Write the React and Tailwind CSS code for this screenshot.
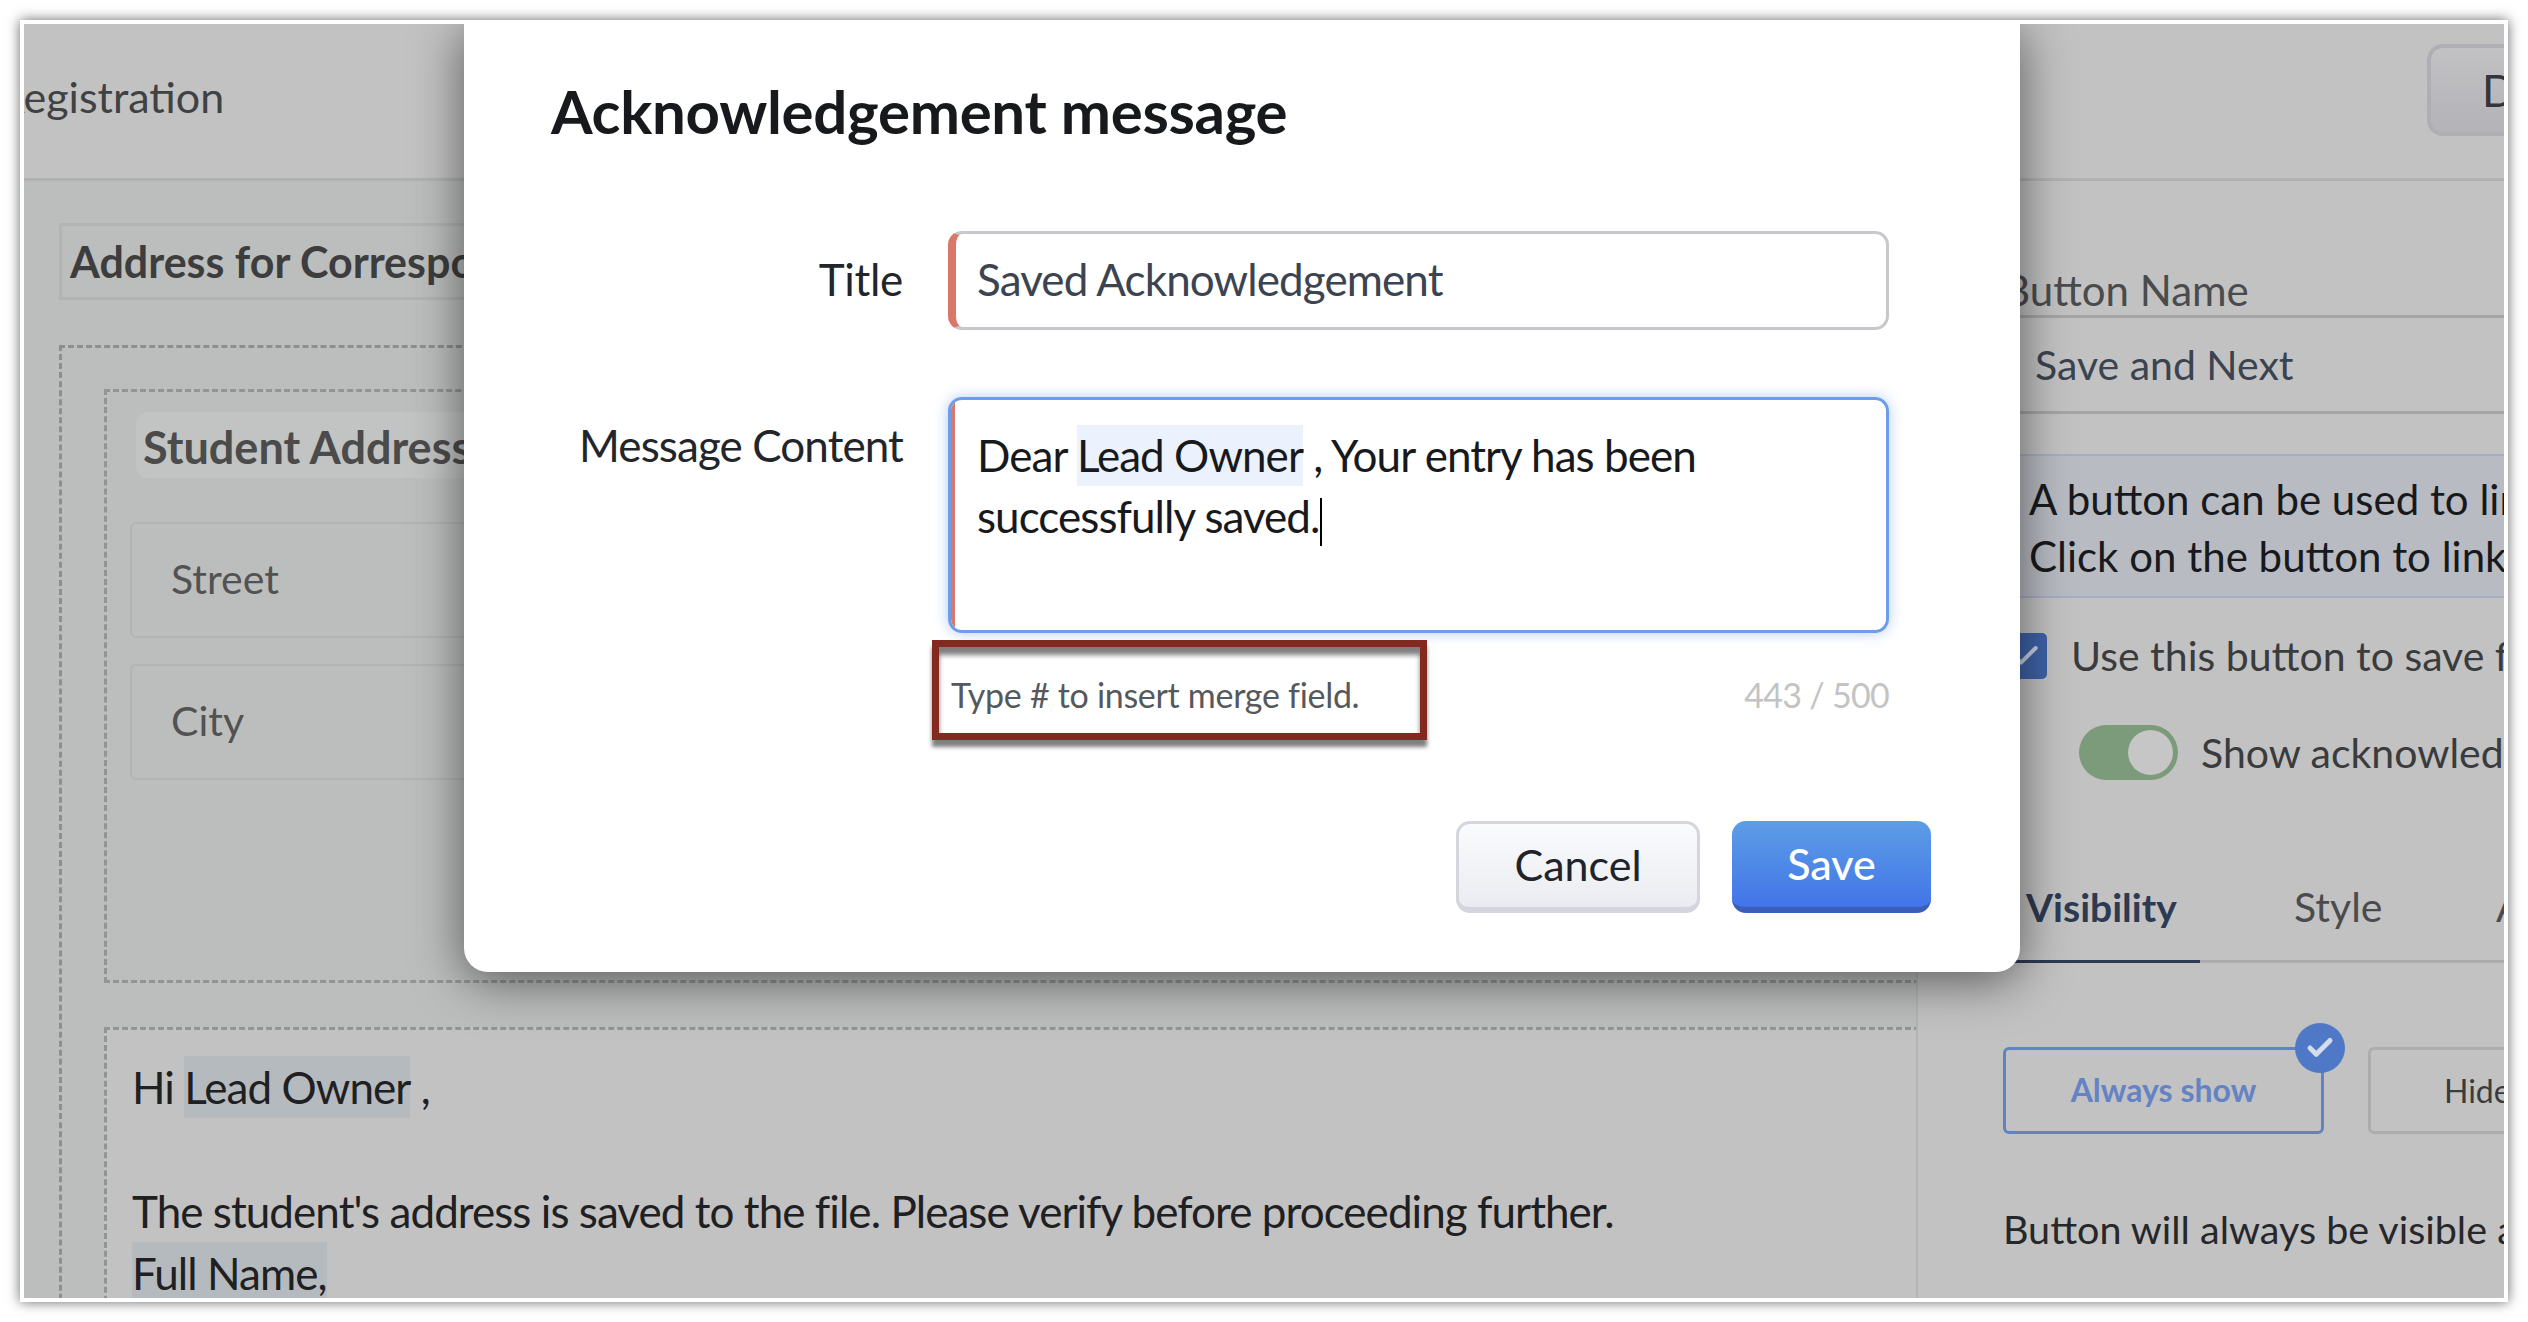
import { Check } from "lucide-react"

function Chip({ children, className = "bg-[#b5babf]" }) {
  return <span className={`inline-block ${className}`}>{children}</span>
}

function Dialog() {
  return (
    <div className="absolute left-[440px] top-0 w-[1556px] h-[948px] bg-white rounded-b-[24px] shadow-[0_8px_50px_rgba(0,0,0,0.55)] pl-[87px] pr-[89px] pt-[56px]">
      <h2 className="text-[60px] leading-[62px] font-bold tracking-[-0.3px] text-[#17191c] whitespace-nowrap">Acknowledgement message</h2>

      <div className="flex mt-[89px]">
        <label className="w-[352px] text-right text-[44px] tracking-[-0.3px] leading-[97px] text-[#22262b]">Title</label>
        <div className="ml-[45px] w-[941px] h-[99px] rounded-[14px] border-[3px] border-l-[8px] border-[#c6c8cb] border-l-[#d9776b] pl-[21px] text-[44px] tracking-[-0.9px] leading-[91px] text-[#3b4450]">
          Saved Acknowledgement
        </div>
      </div>

      <div className="flex mt-[67px]">
        <label className="w-[352px] text-right text-[44px] tracking-[-0.9px] leading-[61px] pt-[18px] text-[#22262b]">Message Content</label>
        <div className="ml-[45px] w-[941px] h-[236px] rounded-[14px] border-[3px] border-[#6c9dea] shadow-[0_0_14px_rgba(90,140,235,0.45)] overflow-hidden">
          <div className="h-full border-l-[4px] border-[#d9776b] pl-[22px] pt-[25px] text-[44px] tracking-[-0.95px] leading-[61px] text-[#17191c]">
            <div className="whitespace-nowrap">
              Dear <Chip className="bg-[#ebf2fd]">Lead Owner</Chip> , Your entry has been
            </div>
            <div className="whitespace-nowrap">
              successfully saved.
              <span className="inline-block w-[2px] h-[48px] bg-black align-middle" />
            </div>
          </div>
        </div>
      </div>

      <div className="relative ml-[397px] w-[941px] h-[124px] flex items-center justify-between pl-[3px] pb-[2px]">
        <span className="text-[34px] tracking-[-0.3px] text-[#55585c]">Type # to insert merge field.</span>
        <span className="text-[34px] tracking-[-0.7px] text-[#c3c3c3]">443 / 500</span>
        {/* red annotation drawn on top of the screenshot */}
        <div className="absolute left-[-16px] top-[7px] w-[495px] h-[100px] border-[7px] border-[#832a20] shadow-[0_7px_4px_rgba(0,0,0,0.5),inset_0_8px_5px_rgba(0,0,0,0.5)]" />
      </div>

      <div className="flex justify-end gap-[32px] mt-[64px]">
        <button className="w-[244px] h-[92px] rounded-[14px] border-[3px] border-b-[6px] border-[#d5d6dd] bg-gradient-to-b from-[#fafbfd] to-[#ebecf1] text-[43px] text-[#20232a]">
          Cancel
        </button>
        <button className="w-[199px] h-[92px] rounded-[14px] border-b-[6px] border-[#3b5fb9] bg-gradient-to-b from-[#5e9de6] to-[#4274e8] text-[43px] font-medium text-white">
          Save
        </button>
      </div>
    </div>
  )
}

function Canvas() {
  return (
    <div className="w-[1894px] shrink-0 overflow-hidden bg-[#bcbebd] border-r-[2px] border-[#b4b5b5] pl-[35px] pt-[42px]">
      <div className="w-[1000px] h-[77px] border-[3px] border-[#b2b4b3] pl-[8px] text-[43px] leading-[71px] font-bold text-[#3d3d3d] whitespace-nowrap">
        Address for Correspondence
      </div>

      <div className="w-[1900px] h-[1000px] mt-[45px] border-[3px] border-dashed border-[#8d8f8e] pl-[42px] pt-[41px]">
        <div className="h-[594px] border-[3px] border-dashed border-[#939594] pl-[29px] pt-[20px]">
          <div className="w-[700px] h-[66px] rounded-[12px] bg-[#c2c4c3] pl-[7px] text-[45px] leading-[70px] font-bold text-[#4b4b4b] whitespace-nowrap">
            Student Address
          </div>
          <div className="w-[700px] h-[116px] ml-[-6px] mt-[44px] rounded-[6px] border-[2px] border-[#b2b4b3] pl-[39px] text-[41px] leading-[110px] text-[#525252]">
            Street
          </div>
          <div className="w-[700px] h-[116px] ml-[-6px] mt-[26px] rounded-[6px] border-[2px] border-[#b2b4b3] pl-[39px] text-[41px] leading-[110px] text-[#525252]">
            City
          </div>
        </div>

        <div className="mt-[44px] h-[400px] border-[3px] border-dashed border-[#939594] bg-[#c2c2c2] pl-[25px] pt-[26px] text-[44px] tracking-[-0.95px] leading-[62px] text-[#1f2022] whitespace-nowrap">
          <div>
            Hi <Chip>Lead Owner</Chip> ,
          </div>
          <div className="h-[62px]" />
          <div>The student's address is saved to the file. Please verify before proceeding further.</div>
          <div>
            <Chip>Full Name,</Chip>
          </div>
        </div>
      </div>
    </div>
  )
}

function SidePanel() {
  return (
    <div className="flex-1 min-w-0 overflow-hidden pl-[85px] whitespace-nowrap">
      <div className="h-[137px] pt-[87px] border-b-[3px] border-[#a4a5a7] text-[42px] leading-[45px] text-[#4a4b4d] ml-[-85px] pl-[85px]">
        Button Name
      </div>
      <div className="h-[96px] border-b-[3px] border-[#a4a5a7] ml-[-85px] pl-[117px] text-[41px] leading-[93px] text-[#3a4350]">
        Save and Next
      </div>

      <div className="mt-[40px] h-[144px] ml-[-85px] pl-[111px] pt-[15px] bg-[#b8bbc2] border-y-[2px] border-[#a5aec6] text-[42px] leading-[57px] text-[#17191c]">
        <div>A button can be used to link</div>
        <div>Click on the button to link</div>
      </div>

      <div className="flex items-center h-[46px] mt-[35px]">
        <div className="w-[44px] h-[46px] shrink-0 rounded-[5px] bg-[#3f63a8] flex items-center justify-center">
          <Check className="w-[32px] h-[32px] text-[#c9d2e4]" strokeWidth={3} />
        </div>
        <span className="ml-[24px] text-[41px] text-[#3a3b3d]">Use this button to save form</span>
      </div>

      <div className="flex items-center mt-[43px] ml-[76px]">
        <div className="w-[99px] h-[55px] shrink-0 rounded-full bg-[#7c9b7a] flex items-center justify-end pr-[5px]">
          <div className="w-[45px] h-[45px] rounded-full bg-[#c5c6c5]" />
        </div>
        <span className="ml-[23px] text-[41px] text-[#3a3b3d]">Show acknowledgement</span>
      </div>

      <div className="flex items-start mt-[98px] h-[81px] border-b-[3px] border-[#adadad] leading-[50px]">
        <div className="w-[197px] h-[81px] shrink-0 pl-[23px] border-b-[3px] border-[#2e3a52] text-[39px] font-bold text-[#2e3a52]">Visibility</div>
        <div className="ml-[94px] w-[202px] shrink-0 text-[41px] text-[#4a4b4d]">Style</div>
        <div className="shrink-0 text-[41px] text-[#4a4b4d]">Actions</div>
      </div>

      <div className="flex mt-[84px] text-[32px]">
        <div className="relative w-[321px] h-[87px] shrink-0 rounded-[6px] border-[3px] border-[#6083c4] flex items-center justify-center font-bold text-[#6483c4]">
          Always show
          <div className="absolute right-[-24px] top-[-27px] w-[50px] h-[50px] rounded-full bg-[#4f78c6] flex items-center justify-center">
            <Check className="w-[30px] h-[30px] text-[#d5dded]" strokeWidth={4} />
          </div>
        </div>
        <div className="ml-[44px] w-[300px] h-[87px] shrink-0 rounded-[6px] border-[3px] border-[#adadad] pl-[73px] leading-[81px] text-[#3a3b3d]">
          Hide
        </div>
      </div>

      <div className="mt-[72px] text-[39.5px] leading-[46px] text-[#26272a]">Button will always be visible at</div>
    </div>
  )
}

export default function App() {
  return (
    <div className="h-[1322px] bg-white p-5 font-[Lato,sans-serif]">
      <div className="relative w-[2488px] h-[1282px] border-4 border-white overflow-hidden shadow-[0_0_12px_rgba(0,0,0,0.6)]">
        <div className="flex flex-col h-full bg-[#c2c2c2]">
          {/* top bar */}
          <div className="flex items-center justify-between h-[157px] shrink-0 border-b-[3px] border-[#b0b1b1] pb-[8px]">
            <span className="ml-[-26px] text-[43px] text-[#404142]">Registration</span>
            <div className="w-[120px] h-[92px] mr-[-43px] mt-[-14px] rounded-[16px] border-[4px] border-[#aeaeb3] bg-gradient-to-b from-[#c2c2c4] to-[#b3b3b8] pl-[51px] text-[44px] leading-[84px] text-[#33353a]">
              Done
            </div>
          </div>
          <div className="flex flex-1 min-h-0">
            <Canvas />
            <SidePanel />
          </div>
        </div>
        <Dialog />
      </div>
    </div>
  )
}
